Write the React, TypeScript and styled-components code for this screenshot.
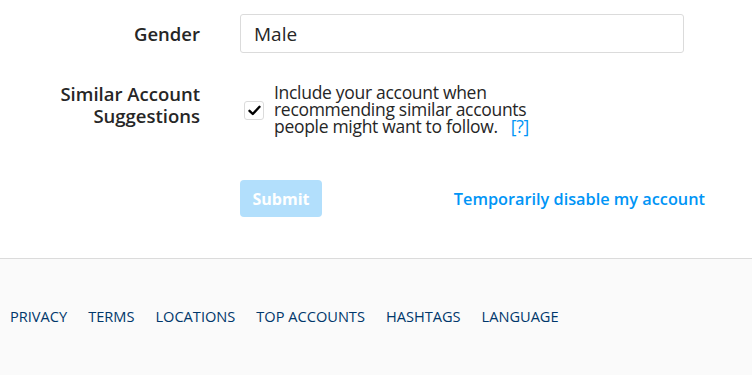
import React from 'react';
import styled, { createGlobalStyle } from 'styled-components';

const GlobalStyle = createGlobalStyle`
    html, body {
        margin: 0;
        padding: 0;
        background: #ffffff;
        font-family: "Open Sans", "Noto Sans", "Liberation Sans", sans-serif;
        color: #262626;
    }
`;

const Page = styled.div`
    display: flex;
    flex-direction: column;
    min-height: 375px;
`;

const Form = styled.form`
    display: grid;
    grid-template-columns: 200px 465px;
    column-gap: 40px;
    row-gap: 31px;
    padding: 14px 0 41px;
    border-bottom: 1px solid #dbdbdb;
`;

const Label = styled.label<{ $top?: boolean }>`
    font-size: 18.5px;
    font-weight: 600;
    line-height: 22px;
    text-align: right;
    align-self: ${(p) => (p.$top ? 'start' : 'center')};
    margin-top: ${(p) => (p.$top ? '-1px' : '0')};
`;

const TextInput = styled.input`
    box-sizing: border-box;
    width: 444px;
    height: 39px;
    padding: 0 13px;
    border: 1px solid #dbdbdb;
    border-radius: 3px;
    font-family: inherit;
    font-size: 19px;
    color: #262626;
    background: #fff;
    outline: none;
`;

const CheckRow = styled.div`
    display: flex;
    align-items: center;
    gap: 10px;
    padding-left: 4px;
`;

const Box = styled.span`
    box-sizing: border-box;
    flex: none;
    width: 20px;
    height: 19px;
    margin-top: 2px;
    border: 1px solid #dbdbdb;
    border-radius: 3px;
    display: flex;
    align-items: center;
    justify-content: center;
    background: #fff;
`;

const CheckText = styled.span`
    font-size: 17.5px;
    line-height: 17px;
    letter-spacing: -0.3px;
    color: #262626;
`;

const Help = styled.a`
    color: #0095f6;
    text-decoration: none;
    margin-left: 13px;
`;

const Actions = styled.div`
    grid-column: 2;
    display: flex;
    align-items: center;
    justify-content: space-between;
    margin-top: 14px;
`;

const SubmitButton = styled.button`
    width: 82px;
    height: 37px;
    border: none;
    border-radius: 4px;
    background: #b2dffc;
    color: #ffffff;
    font-family: inherit;
    font-size: 16px;
    font-weight: 700;
    cursor: default;
`;

const DisableLink = styled.a`
    color: #0095f6;
    font-size: 16.3px;
    font-weight: 600;
    text-decoration: none;
`;

const Footer = styled.footer`
    flex: 1;
    background: #fafafa;
    padding: 47px 10px;
`;

const FooterNav = styled.nav`
    display: flex;
    gap: 21px;
`;

const FooterLink = styled.a`
    color: #00376b;
    font-size: 14.6px;
    text-transform: uppercase;
    text-decoration: none;
`;

const links = ['Privacy', 'Terms', 'Locations', 'Top Accounts', 'Hashtags', 'Language'];

const Check = () => (
    <svg width="13" height="11" viewBox="0 0 13 11">
        <path d="M1.5 5.8 L4.8 9 L11.5 1.8" fill="none" stroke="#000" strokeWidth="2.4" strokeLinecap="round" strokeLinejoin="round" />
    </svg>
);

export default function App() {
    return (
        <>
            <GlobalStyle />
            <Page>
                <Form onSubmit={(e) => e.preventDefault()}>
                    <Label htmlFor="gender">Gender</Label>
                    <TextInput id="gender" defaultValue="Male" />

                    <Label $top>
                        Similar Account
                        <br />
                        Suggestions
                    </Label>
                    <CheckRow>
                        <Box>
                            <Check />
                        </Box>
                        <CheckText>
                            Include your account when
                            <br />
                            recommending similar accounts
                            <br />
                            people might want to follow.
                            <Help href="#">[?]</Help>
                        </CheckText>
                    </CheckRow>

                    <Actions>
                        <SubmitButton type="submit" disabled>
                            Submit
                        </SubmitButton>
                        <DisableLink href="#">Temporarily disable my account</DisableLink>
                    </Actions>
                </Form>
                <Footer>
                    <FooterNav>
                        {links.map((l) => (
                            <FooterLink key={l} href="#">
                                {l}
                            </FooterLink>
                        ))}
                    </FooterNav>
                </Footer>
            </Page>
        </>
    );
}
